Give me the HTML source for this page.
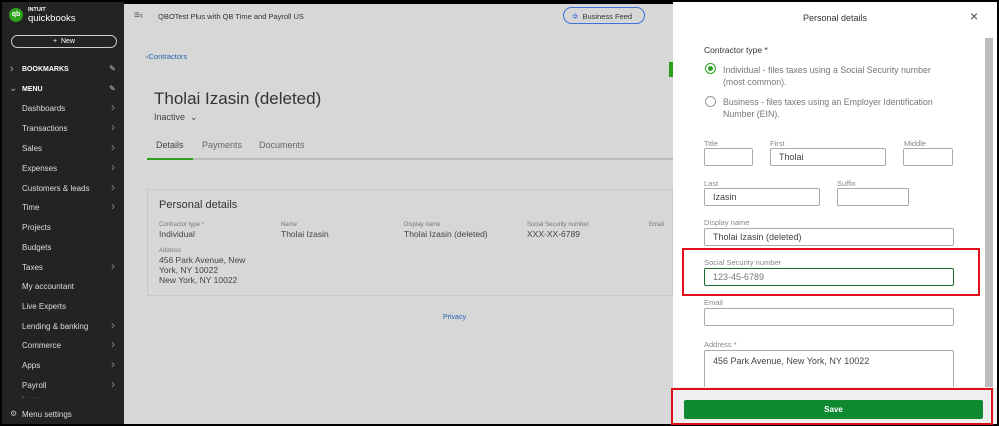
<!DOCTYPE html>
<html><head><style>
*{margin:0;padding:0;box-sizing:border-box}
body{width:999px;height:426px;overflow:hidden;background:#000;font-family:"Liberation Sans",sans-serif;position:relative}
.a{position:absolute;white-space:nowrap}
#sb{position:absolute;left:2px;top:2px;width:122px;height:422px;background:#232323;color:#ddd;font-size:8px}
#main{position:absolute;left:124px;top:4px;width:549px;height:420px;background:#d7d7d7;color:#444}
#pn{position:absolute;left:673px;top:2px;width:324px;height:422px;background:#fff;color:#555}
.chev{position:absolute;left:109px;font-size:12px;color:#888}
.inp{position:absolute;border:1px solid #aaa;border-radius:2px;background:#fff;font-size:9px;color:#444;padding:3px 0 0 8px}
.lb{position:absolute;font-size:7.5px;color:#888}
.rb{position:absolute;border:2px solid #e0101a}
</style></head><body>
<div id="sb">
 <div class="a" style="left:7px;top:6px;width:14px;height:14px;border-radius:50%;background:#2ca01c;color:#fff;font-size:7px;text-align:center;line-height:14px;font-weight:bold">qb</div>
 <div class="a" style="left:26px;top:5px;font-size:5.5px;color:#fff;font-weight:bold">INTUIT</div>
 <div class="a" style="left:26px;top:11px;font-size:9.5px;color:#fff">quickbooks</div>
 <div class="a" style="left:9px;top:33px;width:106px;height:13px;border:1px solid #ccc;border-radius:7px;text-align:center;color:#fff;font-size:7px;line-height:11px">+&nbsp; New</div>
 <div class="a" style="left:8px;top:61px;color:#aaa;font-size:11px">›</div><div class="a" style="left:20px;top:64px;color:#fff;font-weight:bold;font-size:7px">BOOKMARKS</div><div class="a" style="left:107px;top:62px;color:#ccc">✎</div>
 <div class="a" style="left:7px;top:81px;color:#aaa;font-size:10px">⌄</div><div class="a" style="left:20px;top:84px;color:#fff;font-weight:bold;font-size:7px">MENU</div><div class="a" style="left:107px;top:82px;color:#ccc">✎</div>
 <div class="a" style="left:20px;top:102px">Dashboards</div><div class="chev" style="top:98px">›</div>
 <div class="a" style="left:20px;top:122px">Transactions</div><div class="chev" style="top:118px">›</div>
 <div class="a" style="left:20px;top:142px">Sales</div><div class="chev" style="top:138px">›</div>
 <div class="a" style="left:20px;top:162px">Expenses</div><div class="chev" style="top:158px">›</div>
 <div class="a" style="left:20px;top:182px">Customers &amp; leads</div><div class="chev" style="top:178px">›</div>
 <div class="a" style="left:20px;top:201px">Time</div><div class="chev" style="top:197px">›</div>
 <div class="a" style="left:20px;top:221px">Projects</div>
 <div class="a" style="left:20px;top:241px">Budgets</div>
 <div class="a" style="left:20px;top:261px">Taxes</div><div class="chev" style="top:257px">›</div>
 <div class="a" style="left:20px;top:280px">My accountant</div>
 <div class="a" style="left:20px;top:300px">Live Experts</div>
 <div class="a" style="left:20px;top:320px">Lending &amp; banking</div><div class="chev" style="top:316px">›</div>
 <div class="a" style="left:20px;top:339px">Commerce</div><div class="chev" style="top:335px">›</div>
 <div class="a" style="left:20px;top:359px">Apps</div><div class="chev" style="top:355px">›</div>
 <div class="a" style="left:20px;top:379px">Payroll</div><div class="chev" style="top:375px">›</div>
 <div class="a" style="left:20px;top:393px;color:#777;font-size:6px">› &nbsp;·· ···</div>
 <div class="a" style="left:8px;top:407px;color:#bbb">⚙</div><div class="a" style="left:20px;top:408px">Menu settings</div>
</div>
<div id="main">
 <div class="a" style="left:10px;top:6px;font-size:10px;color:#555">≡‹</div>
 <div class="a" style="left:34px;top:8px;font-size:7.5px;color:#333">QBOTest Plus with QB Time and Payroll US</div>
 <div class="a" style="left:439px;top:3px;width:82px;height:17px;border:1px solid #3f6fd8;border-radius:9px;font-size:7.5px;color:#333;padding:4px 0 0 8px"><span style="color:#3f6fd8">✲</span>&nbsp; Business Feed</div>
 <div class="a" style="left:545px;top:58px;width:4px;height:15px;background:#2ca01c"></div>
 <div class="a" style="left:22px;top:48px;font-size:7.5px;color:#2662b0">‹Contractors</div>
 <div class="a" style="left:30px;top:85px;font-size:17px;color:#333">Tholai Izasin (deleted)</div>
 <div class="a" style="left:30px;top:108px;font-size:9px;color:#444">Inactive &nbsp;⌄</div>
 <div class="a" style="left:32px;top:136px;font-size:9px">Details</div>
 <div class="a" style="left:78px;top:136px;font-size:9px;color:#666">Payments</div>
 <div class="a" style="left:135px;top:136px;font-size:9px;color:#666">Documents</div>
 <div class="a" style="left:23px;top:154px;width:526px;height:2px;background:#bbb"></div>
 <div class="a" style="left:23px;top:154px;width:46px;height:2px;background:#2ca01c"></div>
 <div class="a" style="left:23px;top:185px;width:526px;height:107px;border:1px solid #c8c8c8;background:#d7d7d7"></div>
 <div class="a" style="left:35px;top:195px;font-size:11px;color:#333">Personal details</div>
 <div class="a" style="left:35px;top:218px;font-size:6px;color:#777">Contractor type *</div><div class="a" style="left:35px;top:225px;font-size:8.5px">Individual</div>
 <div class="a" style="left:157px;top:218px;font-size:6px;color:#777">Name</div><div class="a" style="left:157px;top:225px;font-size:8.5px">Tholai Izasin</div>
 <div class="a" style="left:280px;top:218px;font-size:6px;color:#777">Display name</div><div class="a" style="left:280px;top:225px;font-size:8.5px">Tholai Izasin (deleted)</div>
 <div class="a" style="left:403px;top:218px;font-size:6px;color:#777">Social Security number</div><div class="a" style="left:403px;top:225px;font-size:8.5px">XXX-XX-6789</div>
 <div class="a" style="left:525px;top:218px;font-size:6px;color:#777">Email</div>
 <div class="a" style="left:35px;top:244px;font-size:6px;color:#777">Address</div>
 <div class="a" style="left:35px;top:251px;font-size:8.5px;line-height:10px">456 Park Avenue, New<br>York, NY 10022<br>New York, NY 10022</div>
 <div class="a" style="left:319px;top:310px;font-size:7px;color:#2662b0">Privacy</div>
</div>
<div id="pn">
 <div class="a" style="left:130px;top:11px;font-size:9px;color:#333">Personal details</div>
 <div class="a" style="left:297px;top:6px;font-size:14px;color:#444">×</div>
 <div class="a" style="left:312px;top:36px;width:8px;height:352px;background:#bdbdbd"></div>
 <div class="a" style="left:31px;top:43px;font-size:8.5px;color:#333">Contractor type *</div>
 <div class="a" style="left:32px;top:61px;width:11px;height:11px;border:1px solid #2ca01c;border-radius:50%"><div style="margin:2px;width:5px;height:5px;border-radius:50%;background:#2ca01c"></div></div>
 <div class="a" style="left:50px;top:62px;font-size:8.8px;line-height:12px;color:#777">Individual - files taxes using a Social Security number<br>(most common).</div>
 <div class="a" style="left:32px;top:94px;width:11px;height:11px;border:1px solid #999;border-radius:50%"></div>
 <div class="a" style="left:50px;top:94px;font-size:8.8px;line-height:12px;color:#777">Business - files taxes using an Employer Identification<br>Number (EIN).</div>
 <div class="lb" style="left:31px;top:137px">Title</div><div class="lb" style="left:97px;top:137px">First</div><div class="lb" style="left:231px;top:137px">Middle</div>
 <div class="inp" style="left:31px;top:146px;width:49px;height:18px"></div>
 <div class="inp" style="left:97px;top:146px;width:116px;height:18px">Tholai</div>
 <div class="inp" style="left:230px;top:146px;width:50px;height:18px"></div>
 <div class="lb" style="left:31px;top:177px">Last</div><div class="lb" style="left:164px;top:177px">Suffix</div>
 <div class="inp" style="left:31px;top:186px;width:116px;height:18px">Izasin</div>
 <div class="inp" style="left:164px;top:186px;width:72px;height:18px"></div>
 <div class="lb" style="left:31px;top:216px">Display name</div>
 <div class="inp" style="left:31px;top:226px;width:250px;height:18px">Tholai Izasin (deleted)</div>
 <div class="rb" style="left:9px;top:246px;width:298px;height:48px"></div>
 <div class="lb" style="left:31px;top:256px">Social Security number</div>
 <div class="inp" style="left:31px;top:266px;width:250px;height:18px;border-color:#1c6b2a;color:#777">123-45-6789</div>
 <div class="lb" style="left:31px;top:296px">Email</div>
 <div class="inp" style="left:31px;top:306px;width:250px;height:18px"></div>
 <div class="lb" style="left:31px;top:338px">Address *</div>
 <div class="inp" style="left:31px;top:348px;width:250px;height:40px;padding-top:5px">456 Park Avenue, New York, NY 10022</div>
 <div class="a" style="left:0;top:385px;width:324px;height:37px;background:#efefef"></div>
 <div class="rb" style="left:-2px;top:386px;width:322px;height:37px"></div>
 <div class="a" style="left:11px;top:398px;width:299px;height:19px;background:#108a32;border-radius:2px;color:#fff;font-size:8px;font-weight:bold;text-align:center;line-height:19px">Save</div>
</div>
</body></html>
